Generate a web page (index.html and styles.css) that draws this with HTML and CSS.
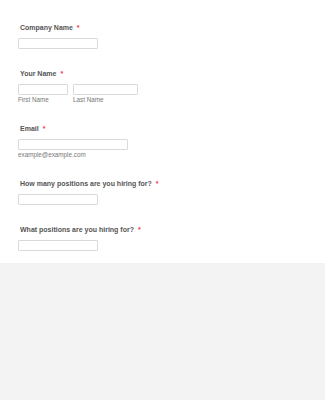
FILE: index.html
```html
<!DOCTYPE html>
<html lang="en">
<head>
    <meta charset="UTF-8">
    <meta name="viewport" content="width=device-width, initial-scale=1.0">
    <title>Job Application</title>
    <link rel="stylesheet" href="styles.css">
</head>
<body>
    <form class="form">
        <ul class="form-list">
            <li class="form-line">
                <label class="form-label">Company Name <span class="required">*</span></label>
                <input class="form-input w-80" type="text">
            </li>
            <li class="form-line">
                <label class="form-label">Your Name <span class="required">*</span></label>
                <div class="name-row">
                    <span class="sub-field">
                        <input class="form-input w-50" type="text">
                        <span class="sublabel">First Name</span>
                    </span>
                    <span class="sub-field">
                        <input class="form-input w-65" type="text">
                        <span class="sublabel">Last Name</span>
                    </span>
                </div>
            </li>
            <li class="form-line">
                <label class="form-label">Email <span class="required">*</span></label>
                <input class="form-input w-110" type="email">
                <span class="sublabel">example@example.com</span>
            </li>
            <li class="form-line">
                <label class="form-label">How many positions are you hiring for? <span class="required">*</span></label>
                <input class="form-input w-80" type="text">
            </li>
            <li class="form-line">
                <label class="form-label">What positions are you hiring for? <span class="required">*</span></label>
                <input class="form-input w-80" type="text">
            </li>
        </ul>
    </form>
</body>
</html>
```

FILE: styles.css
```css
body {
    margin: 0;
    padding: 0;
    background: #f3f3f3;
    font-family: 'Liberation Sans', Arial, sans-serif;
}

.form {
    background: white;
    padding: 13px 0 2px;
}

.form-list {
    list-style: none;
    margin: 0;
    padding: 0;
}

.form-line {
    padding: 10px 18px;
}

.form-label {
    display: block;
    padding-left: 2px;
    margin-bottom: 5px;
    font-size: 7px;
    line-height: 10px;
    font-weight: bold;
    color: #555;
}

.required {
    color: #f23a3c;
    margin-left: 2px;
}

.form-input {
    display: block;
    box-sizing: border-box;
    height: 11px;
    margin: 0;
    padding: 0;
    border: 1px solid #dadada;
    border-radius: 1px;
    background: white;
}

.w-50 { width: 50px; }
.w-65 { width: 65px; }
.w-80 { width: 80px; }
.w-110 { width: 110px; }

.name-row {
    display: flex;
    gap: 5px;
}

.sub-field {
    display: block;
}

.sublabel {
    display: block;
    margin-top: 1px;
    font-size: 6.3px;
    line-height: 8px;
    color: #777;
}
```
